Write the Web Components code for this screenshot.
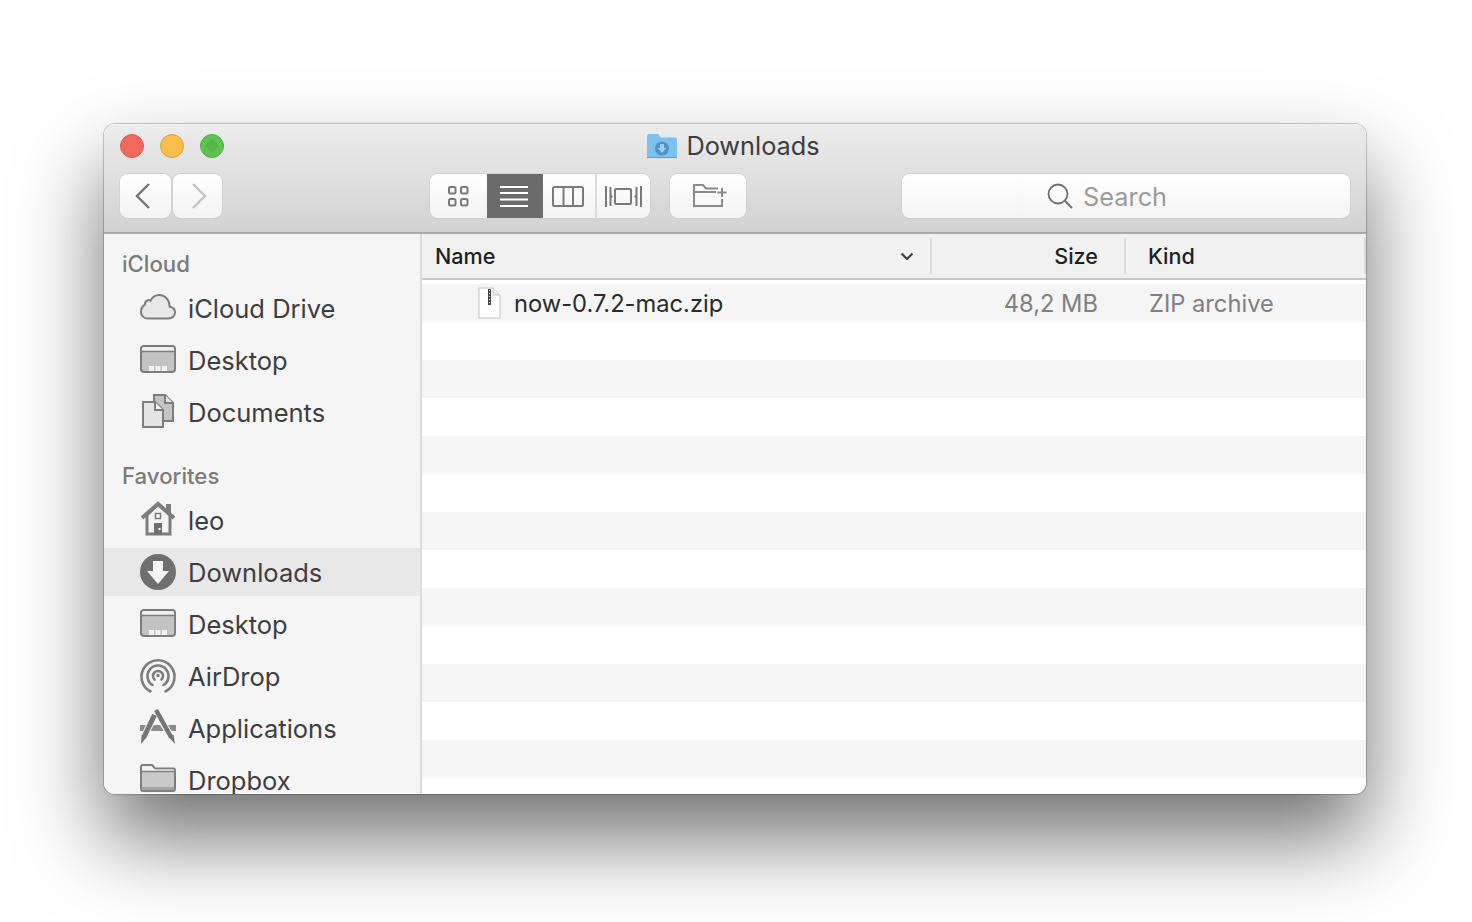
<!DOCTYPE html>
<html>
<head>
<meta charset="utf-8">
<title>Downloads</title>
<style>
    html, body {margin: 0; height: 100%; background: #fff; overflow: hidden;}
    body {font-family: Inter, "Liberation Sans", sans-serif; padding: 124px 106px 0 104px; box-sizing: border-box;}
</style>
</head>
<body>
<finder-window label="Downloads">
    <side-group label="iCloud" slot="sidebar">
        <side-item icon="cloud">iCloud Drive</side-item>
        <side-item icon="desktop">Desktop</side-item>
        <side-item icon="documents">Documents</side-item>
    </side-group>
    <side-group label="Favorites" slot="sidebar">
        <side-item icon="home">leo</side-item>
        <side-item icon="downloads" selected>Downloads</side-item>
        <side-item icon="desktop">Desktop</side-item>
        <side-item icon="airdrop">AirDrop</side-item>
        <side-item icon="apps">Applications</side-item>
        <side-item icon="folder">Dropbox</side-item>
    </side-group>
    <file-list>
        <file-row name="now-0.7.2-mac.zip" size="48,2 MB" kind="ZIP archive"></file-row>
        <file-row></file-row><file-row></file-row><file-row></file-row><file-row></file-row>
        <file-row></file-row><file-row></file-row><file-row></file-row><file-row></file-row>
        <file-row></file-row><file-row></file-row><file-row></file-row><file-row></file-row>
        <file-row></file-row>
    </file-list>
</finder-window>
<script>
const ICONS = {
    cloud: `<path d="M7.500 28.500H28.500c3.800 0 6.500-2.700 6.500-6 0-3.100-2.200-5.400-5.200-5.800C29.600 10 25 5 19.500 5c-3.900 0-7.200 2.100-8.900 5.600-1-.500-2-.600-2.800-.300-1.900.600-3 2.300-2.900 4.300C2.600 15.900 1 18.500 1 22c0 3.700 2.800 6.500 6.500 6.500z" fill="#e8e8e8" stroke="#7d7d7d" stroke-width="2"/>`,
    desktop: `<rect x="1" y="4" width="34" height="26" rx="3" fill="#c3c3c3" stroke="#7d7d7d" stroke-width="2"/>
        <path d="M2 9V7a2 2 0 0 1 2-2h28a2 2 0 0 1 2 2v2z" fill="#eee"/><path d="M1 9.500h34" stroke="#7d7d7d" stroke-width="1.500"/>
        <path d="M9 24h5v5H9zM15.500 24h5v5h-5zM22 24h5v5h-5z" fill="#f4f4f4"/>`,
    documents: `<path d="M14 1h11l8 8v18H14z" fill="#c4c4c4" stroke="#7d7d7d" stroke-width="2"/><path d="M25 1v8h8" fill="#e6e6e6" stroke="#7d7d7d" stroke-width="2"/>
        <path d="M3 8h12l8 8v17H3z" fill="#e4e4e4" stroke="#7d7d7d" stroke-width="2"/><path d="M15 8v8h8" fill="#f2f2f2" stroke="#7d7d7d" stroke-width="2"/>`,
    home: `<path d="M7 13V32H30V13L18 2z" fill="#f4f4f4" stroke="#7d7d7d" stroke-width="3"/>
        <path d="M26 2h5v10h-5z" fill="#7d7d7d"/>
        <path d="M2 16L18 2 34 16" fill="none" stroke="#7d7d7d" stroke-width="4"/>
        <rect x="15.500" y="11.500" width="5" height="5" fill="#fff" stroke="#7d7d7d" stroke-width="1.500"/><path d="M14 21h8v12h-8z" fill="#6f6f6f"/><rect x="18.500" y="26" width="2" height="2" fill="#fff"/>`,
    downloads: `<circle cx="18" cy="18" r="18" fill="#6f6f6f"/><path d="M13 7h10v10h6L18 30 7 17h6z" fill="#f4f4f4"/>`,
    airdrop: `<g fill="none" stroke="#7d7d7d" stroke-width="2.600" stroke-linecap="round">
        <path d="M10.500 33.500A16.500 16.500 0 1 1 25.500 33.500"/><path d="M12.500 27A10.500 10.500 0 1 1 23.500 27"/><path d="M14.500 21.500A5 5 0 1 1 21.500 21.500"/></g>
        <circle cx="18" cy="17.500" r="1.700" fill="#7d7d7d"/>`,
    apps: `<path d="M0 15h36v6H0z" fill="#8c8c8c"/>
        <g fill="none" stroke="#f5f5f5" stroke-width="7"><path d="M14.500 5L4 27"/><path d="M15.500 0L31 27"/></g>
        <g fill="none" stroke="#757575"><path d="M14.500 5L4 27" stroke-width="5"/><path d="M16 0L31 27" stroke-width="4.500"/></g>
        <path d="M1.500 25l5 2.500L1 34zM28.500 27l5-2.500L35 34z" fill="#757575"/>`,
    folder: `<path d="M1 27V5a2 2 0 0 1 2-2h9l3 3.500h18a2 2 0 0 1 2 2V27a2 2 0 0 1-2 2H3a2 2 0 0 1-2-2z" fill="#c9c9c9" stroke="#7d7d7d" stroke-width="2"/>
        <path d="M2 9V5a1 1 0 0 1 1-1h8.500l3 3.500H33a1 1 0 0 1 1 1V9z" fill="#f2f2f2"/><path d="M1 9.500h34" stroke="#7d7d7d" stroke-width="1.500"/>
        <path d="M2 25h32v2a1 1 0 0 1-1 1H3a1 1 0 0 1-1-1z" fill="#a5a5a5"/>`,
    title: `<path d="M0 22V2a2 2 0 0 1 2-2h9l3 3.500h14a2 2 0 0 1 2 2V22a2 2 0 0 1-2 2H2a2 2 0 0 1-2-2z" fill="#7cc1f0"/><path d="M0 23h30v.500a.500.500 0 0 1-.500.500H.500a.500.500 0 0 1-.500-.500z" fill="#4f9fd8"/>
        <circle cx="15" cy="14.500" r="7" fill="#4e93c4"/><path d="M13 10h4v4h2.500L15 19l-4.500-5H13z" fill="#9bd0f4"/>`,
    back: `<path d="M15 3L3 15l12 12" fill="none" stroke="#737373" stroke-width="2.400"/>`,
    forward: `<path d="M3 3l12 12L3 27" fill="none" stroke="#c4c4c4" stroke-width="2.400"/>`,
    grid: `<g fill="none" stroke="#7a7a7a" stroke-width="2"><rect x="1" y="1" width="6.500" height="6.500" rx="1.500"/><rect x="13" y="1" width="6.500" height="6.500" rx="1.500"/><rect x="1" y="13" width="6.500" height="6.500" rx="1.500"/><rect x="13" y="13" width="6.500" height="6.500" rx="1.500"/></g>`,
    list: `<path d="M0 1h28M0 7h28M0 13.500h28M0 20h28" stroke="#fff" stroke-width="2"/>`,
    columns: `<g fill="none" stroke="#7a7a7a" stroke-width="2"><rect x="1" y="1" width="30" height="19" rx="1.500"/><path d="M11.500 1v19M21 1v19"/></g>`,
    cover: `<g fill="none" stroke="#7a7a7a" stroke-width="2"><rect x="10" y="3" width="16" height="15" rx="1"/><path d="M1 0v21M5.500 1v19M36 0v21M31.500 1v19"/></g><path d="M5 7l3 3.500L5 14zM32 7l-3 3.500 3 3.500z" fill="#7a7a7a"/>`,
    newfolder: `<g fill="none" stroke="#8a8a8a" stroke-width="2"><path d="M1 9V23h28v-7"/><path d="M1 9V2h9l3 3.500h12"/><path d="M1 9h22"/></g><path d="M29 5v9M24.500 9.500h9" stroke="#8a8a8a" stroke-width="2" fill="none"/>`,
    search: `<circle cx="11" cy="11" r="9.500" fill="none" stroke="#6e6e6e" stroke-width="1.800"/><path d="M17.800 17.800L25 25" stroke="#6e6e6e" stroke-width="2"/>`,
    sort: `<path d="M1.500 1.500L7 7l5.500-5.500" fill="none" stroke="#3f3f3f" stroke-width="2.200"/>`,
    zip: `<path d="M1 1h14l7 7v23H1z" fill="#fff" stroke="#c4c4c4"/><path d="M15 1v7h7" fill="#eee" stroke="#c4c4c4"/>
        <path d="M10 2h3v16h-3z" fill="#444"/><path d="M11 3h1v1h-1zM11 6h1v1h-1zM11 9h1v1h-1zM11 12h1v1h-1zM11 15h1v1h-1z" fill="#fff"/>`
};

customElements.define('ui-icon', class extends HTMLElement {
    constructor() {
        super();
        const [w, h] = (this.getAttribute('box') || '36 36').split(' ');
        this.attachShadow({ mode: 'open' }).innerHTML =
            `<style>
                :host {display: block; width: ${w}px; height: ${h}px; flex: none;}
                svg {display: block; overflow: visible;}
            </style>
            <svg width="${w}" height="${h}" viewBox="0 0 ${w} ${h}">${ICONS[this.getAttribute('name')]}</svg>`;
    }
});

customElements.define('traffic-lights', class extends HTMLElement {
    constructor() {
        super();
        this.attachShadow({ mode: 'open' }).innerHTML =
            `<style>
                :host {display: flex; gap: 16px;}
                i {display: block; width: 24px; height: 24px; border-radius: 50%; box-sizing: border-box; border: 1px solid;}
                .r {background: #f0695e; border-color: #df5a50;}
                .y {background: #f8bd4b; border-color: #dea03f;}
                .g {background: #5fc351; border-color: #53ae47; position: relative;}
                .g::after {content: ''; position: absolute; left: 6px; top: 6px; width: 10px; height: 10px; background: #55b44a; transform: rotate(45deg);}
            </style>
            <i class="r"></i><i class="y"></i><i class="g"></i>`;
    }
});

customElements.define('tool-group', class extends HTMLElement {
    constructor() {
        super();
        this.attachShadow({ mode: 'open' }).innerHTML =
            `<style>
                :host {display: flex; height: 44px; border-radius: 8px; overflow: hidden; box-sizing: border-box;
                    background: linear-gradient(#fff, #f3f3f3); box-shadow: 0 0 0 1px #d2d2d2, 0 1px 0 #b9b9b9;}
            </style>
            <slot></slot>`;
    }
});

customElements.define('tool-button', class extends HTMLElement {
    constructor() {
        super();
        this.attachShadow({ mode: 'open' }).innerHTML =
            `<style>
                :host {display: flex; align-items: center; justify-content: center; box-sizing: border-box; height: 100%;}
                :host([active]) {background: #6b6b6b;}
                :host([divided]) {border-left: 2px solid #dcdcdc;}
            </style>
            <slot></slot>`;
    }
});

customElements.define('search-field', class extends HTMLElement {
    constructor() {
        super();
        this.attachShadow({ mode: 'open' }).innerHTML =
            `<style>
                :host {display: flex; align-items: center; justify-content: center; gap: 10px; box-sizing: border-box; height: 44px; width: 449px;
                    border-radius: 8px; background: linear-gradient(#fff, #f4f4f4); box-shadow: 0 0 0 1px #d2d2d2, 0 1px 0 #b9b9b9;
                    color: #9b9b9b; font-size: 25.300px; padding-right: 38px;}
            </style>
            <ui-icon name="search" box="26 26"></ui-icon><span>Search</span>`;
    }
});

customElements.define('finder-window', class extends HTMLElement {
    constructor() {
        super();
        this.attachShadow({ mode: 'open' }).innerHTML =
            `<style>
                :host {display: flex; flex-direction: column; width: 1262px; height: 670px; box-sizing: border-box; border-radius: 11px; overflow: hidden; background: #fff;
                    box-shadow: 0 0 0 1px rgba(0,0,0,.2), 0 44px 84px rgba(0,0,0,.56);}
                header {flex: none; height: 110px; box-sizing: border-box; padding: 5px 16px 0;
                    background: linear-gradient(#ececec, #d2d2d2); border-bottom: 2px solid #a9a9a9; border-top: 1px solid #f4f4f4;}
                .top {height: 30px; display: grid; grid-template-columns: 1fr auto 1fr; align-items: center; padding-right: 4px;}
                .caption {display: flex; align-items: center; gap: 9px; font-size: 25.300px; color: #3d3d3d;}
                .caption ui-icon {margin-left: 1px;}
                .tools {display: flex; margin-top: 14px;}
                .nav {margin-right: 208px;}
                .views {margin-right: 20px;}
                .folder {margin-right: 156px;}
                .body {flex: 1; min-height: 0; display: flex;}
                aside {flex: none; width: 318px; box-sizing: border-box; background: #f5f5f5; border-right: 2px solid #dcdcdc; overflow: hidden; padding-top: 12px;}
                main {flex: 1; min-width: 0; overflow: hidden;}
            </style>
            <header>
                <div class="top">
                    <traffic-lights></traffic-lights>
                    <div class="caption"><ui-icon name="title" box="30 24"></ui-icon><span>${this.getAttribute('label')}</span></div>
                </div>
                <div class="tools">
                    <tool-group class="nav" style="background:none;box-shadow:none;overflow:visible;gap:2px">
                        <tool-group style="width:51px"><tool-button style="width:100%"><ui-icon name="back" box="18 30" style="margin-right:6px"></ui-icon></tool-button></tool-group>
                        <tool-group style="width:49px"><tool-button style="width:100%"><ui-icon name="forward" box="18 30" style="margin-left:2px"></ui-icon></tool-button></tool-group>
                    </tool-group>
                    <tool-group class="views">
                        <tool-button style="width:57px"><ui-icon name="grid" box="21 21"></ui-icon></tool-button>
                        <tool-button active style="width:56px"><ui-icon name="list" box="28 21" style="margin-right:2px"></ui-icon></tool-button>
                        <tool-button style="width:52px"><ui-icon name="columns" box="32 21" style="margin-right:2px"></ui-icon></tool-button>
                        <tool-button divided style="width:56px"><ui-icon name="cover" box="37 21"></ui-icon></tool-button>
                    </tool-group>
                    <tool-group class="folder" style="width:76px"><tool-button style="width:100%"><ui-icon name="newfolder" box="34 24" style="margin:0 0 2px 4px"></ui-icon></tool-button></tool-group>
                    <search-field></search-field>
                </div>
            </header>
            <div class="body">
                <aside><slot name="sidebar"></slot></aside>
                <main><slot></slot></main>
            </div>`;
    }
});

customElements.define('side-group', class extends HTMLElement {
    constructor() {
        super();
        this.attachShadow({ mode: 'open' }).innerHTML =
            `<style>
                :host {display: block; margin-bottom: 22px;}
                h2 {margin: 0 0 2px; padding-left: 18px; height: 36px; line-height: 36px; font-size: 22.200px; font-weight: 500; color: #7b7b7b;}
                .items {display: flex; flex-direction: column; gap: 4px;}
            </style>
            <h2>${this.getAttribute('label')}</h2>
            <div class="items"><slot></slot></div>`;
    }
});

customElements.define('side-item', class extends HTMLElement {
    constructor() {
        super();
        this.attachShadow({ mode: 'open' }).innerHTML =
            `<style>
                :host {display: flex; align-items: center; gap: 12px; height: 48px; padding-left: 36px; font-size: 25.500px; color: #3e3e3e; white-space: nowrap;}
                :host([selected]) {background: #e8e8e8;}
            </style>
            <ui-icon name="${this.getAttribute('icon')}"></ui-icon><slot></slot>`;
    }
});

customElements.define('file-list', class extends HTMLElement {
    constructor() {
        super();
        this.attachShadow({ mode: 'open' }).innerHTML =
            `<style>
                :host {display: block;}
                .head {display: flex; height: 46px; box-sizing: border-box; background: #f1f1f1; border-bottom: 2px solid #c8c8c8; font-size: 21.600px; font-weight: 500; color: #1f1f1f; align-items: center;}
                .head > div {display: flex; align-items: center; box-sizing: border-box; height: 36px; border-right: 2px solid #dcdcdc;}
                .name {width: 510px; padding: 0 16px 0 13px; justify-content: space-between;}
                .size {width: 194px; padding-right: 26px; justify-content: flex-end;}
                .kind {width: 240px; padding-left: 22px;}
                .rows {margin-top: 4px;}
            </style>
            <div class="head">
                <div class="name"><span>Name</span><ui-icon name="sort" box="14 9"></ui-icon></div>
                <div class="size">Size</div>
                <div class="kind">Kind</div>
            </div>
            <div class="rows"><slot></slot></div>`;
    }
});

customElements.define('file-row', class extends HTMLElement {
    constructor() {
        super();
        const name = this.getAttribute('name');
        this.attachShadow({ mode: 'open' }).innerHTML =
            `<style>
                :host {display: flex; align-items: center; height: 38px; font-size: 23.700px; color: #808080; white-space: nowrap;}
                :host(:nth-child(odd)) {background: #f5f5f5;}
                .name {width: 510px; box-sizing: border-box; padding-left: 56px; display: flex; align-items: center; gap: 13px; color: #2a2a2a;}
                .size {width: 194px; box-sizing: border-box; padding-right: 28px; text-align: right;}
                .kind {padding-left: 23px;}
            </style>
            ${name ? `<div class="name"><ui-icon name="zip" box="23 32"></ui-icon><span>${name}</span></div>
            <div class="size">${this.getAttribute('size')}</div>
            <div class="kind">${this.getAttribute('kind')}</div>` : ''}`;
    }
});
</script>
</body>
</html>
